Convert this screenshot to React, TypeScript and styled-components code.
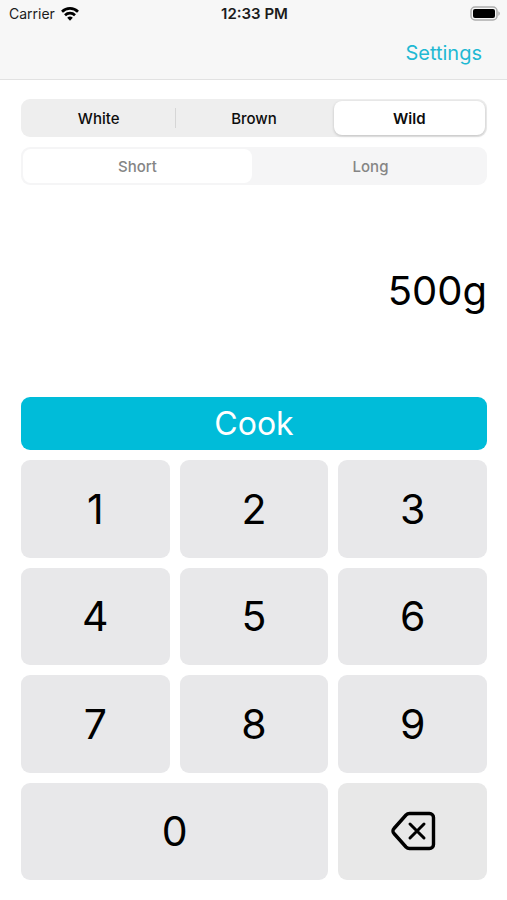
import React, { useState } from 'react';
import styled, { createGlobalStyle } from 'styled-components';

const GlobalStyle = createGlobalStyle`
  *, *::before, *::after { box-sizing: border-box; }
  body {
    margin: 0;
    background: #fff;
    color: #000;
    font-family: Inter, "Liberation Sans", sans-serif;
  }
  button, input { font: inherit; color: inherit; }
`;

const Screen = styled.div`
  display: flex;
  flex-direction: column;
  min-height: 100vh;
`;

const Header = styled.header`
  background: #f7f7f7;
  border-bottom: 1px solid #e2e2e2;
`;

const StatusBar = styled.div`
  display: grid;
  grid-template-columns: 1fr auto 1fr;
  align-items: center;
  height: 27px;
  padding: 0 7px 0 9px;
  font-size: 14px;
  color: #1c1c1c;
`;

const Carrier = styled.div`
  display: flex;
  align-items: center;
  gap: 6px;
`;

const Clock = styled.time`
  font-size: 15px;
  font-weight: 600;
`;

const Battery = styled.svg`
  justify-self: end;
`;

const NavBar = styled.nav`
  display: flex;
  justify-content: flex-end;
  align-items: center;
  height: 52px;
  padding: 0 25px;
`;

const NavLink = styled.a`
  color: #1fb9d3;
  font-size: 20px;
  line-height: 24px;
  text-decoration: none;
`;

const Main = styled.main`
  flex: 1;
  display: flex;
  flex-direction: column;
  padding: 19px 20px 20px 21px;
`;

const Selectors = styled.div`
  display: grid;
  gap: 10px;
`;

const Segments = styled.fieldset<{ $muted: boolean }>`
  display: flex;
  gap: 4px;
  min-width: 0;
  height: 38px;
  margin: 0;
  padding: 2px;
  border: 0;
  border-radius: 9px;
  background: ${p => (p.$muted ? '#f5f5f6' : '#eeeeee')};
  color: ${p => (p.$muted ? '#858585' : '#0c0c0c')};
`;

const Segment = styled.label<{ $selected: boolean; $muted: boolean; $divided: boolean }>`
  position: relative;
  flex: 1;
  display: flex;
  align-items: center;
  justify-content: center;
  border-radius: 8px;
  font-size: 15px;
  font-weight: ${p => (p.$selected && !p.$muted ? 600 : 500)};
  background: ${p => (p.$selected ? '#fff' : 'transparent')};
  box-shadow: ${p => (p.$selected && !p.$muted ? '0 1px 3px rgba(0, 0, 0, 0.2)' : 'none')};
  cursor: pointer;

  &::after {
    content: "";
    display: ${p => (p.$divided ? 'block' : 'none')};
    position: absolute;
    right: -2px;
    top: 7px;
    bottom: 7px;
    width: 1px;
    background: #d6d6d6;
  }
`;

const SegmentInput = styled.input`
  position: absolute;
  inset: 0;
  margin: 0;
  opacity: 0;
`;

const Amount = styled.output`
  display: flex;
  align-items: center;
  justify-content: flex-end;
  height: 212px;
  font-size: 40px;
  line-height: 48px;
`;

const Keypad = styled.div`
  flex: 1;
  display: grid;
  grid-template-columns: repeat(3, 1fr);
  grid-template-rows: 53px repeat(4, minmax(60px, 1fr));
  gap: 10px;
`;

const Key = styled.button<{ $span?: number }>`
  grid-column: span ${p => p.$span ?? 1};
  display: flex;
  align-items: center;
  justify-content: center;
  padding: 0;
  border: 0;
  border-radius: 9px;
  background: #e8e8ea;
  font-size: 41px;
  line-height: 48px;
  cursor: pointer;
`;

const CookKey = styled(Key)`
  background: #00bcd9;
  color: #fff;
  font-size: 32px;
  line-height: 40px;
`;

const DeleteKey = styled(Key)`
  background: #e8e8e8;
`;

interface ChoiceProps {
  name: string;
  options: string[];
  value: string;
  muted?: boolean;
  onChange: (value: string) => void;
}

function Choice({ name, options, value, muted = false, onChange }: ChoiceProps) {
  const selectedIndex = options.indexOf(value);
  return (
    <Segments $muted={muted} aria-label={name}>
      {options.map((option, i) => (
        <Segment
          key={option}
          $selected={option === value}
          $muted={muted}
          $divided={i < options.length - 1 && i !== selectedIndex && i + 1 !== selectedIndex}
        >
          <SegmentInput
            type="radio"
            name={name}
            value={option}
            checked={option === value}
            onChange={() => onChange(option)}
          />
          {option}
        </Segment>
      ))}
    </Segments>
  );
}

export default function App() {
  const [rice, setRice] = useState('Wild');
  const [grain, setGrain] = useState('Short');
  const [grams, setGrams] = useState('500');

  const press = (digit: string) => setGrams(g => (g === '0' ? digit : g + digit).slice(0, 5));
  const erase = () => setGrams(g => g.slice(0, -1) || '0');

  return (
    <Screen>
      <GlobalStyle />
      <Header>
        <StatusBar>
          <Carrier>
            Carrier
            <svg width="18" height="14" viewBox="0 0 18 14" fill="none" stroke="#000" strokeWidth="2.7" aria-hidden="true">
              <path d="M1 4.7a11.4 11.4 0 0 1 16 0" />
              <path d="M4 8.2a7.2 7.2 0 0 1 10 0" />
              <path d="M6.2 10.8a4 4 0 0 1 5.6 0L9 13.7z" fill="#000" stroke="none" />
            </svg>
          </Carrier>
          <Clock>12:33 PM</Clock>
          <Battery width="30" height="15" viewBox="0 0 30 15" aria-label="Battery full">
            <rect x="1" y="1" width="26" height="13" rx="4" fill="#f7f7f7" stroke="#adadad" strokeWidth="1.5" />
            <rect x="3" y="3" width="22" height="9" rx="2" fill="#000" />
            <path d="M28.3 5.2c2 .9 2 3.7 0 4.6z" fill="#adadad" />
          </Battery>
        </StatusBar>
        <NavBar>
          <NavLink href="#settings">Settings</NavLink>
        </NavBar>
      </Header>
      <Main>
        <Selectors>
          <Choice name="Rice" options={['White', 'Brown', 'Wild']} value={rice} onChange={setRice} />
          <Choice name="Grain" options={['Short', 'Long']} value={grain} muted onChange={setGrain} />
        </Selectors>
        <Amount>{grams}g</Amount>
        <Keypad>
          <CookKey type="button" $span={3}>Cook</CookKey>
          {['1', '2', '3', '4', '5', '6', '7', '8', '9'].map(d => (
            <Key key={d} type="button" onClick={() => press(d)}>{d}</Key>
          ))}
          <Key type="button" $span={2} onClick={() => press('0')}>0</Key>
          <DeleteKey type="button" aria-label="Delete" onClick={erase}>
            <svg width="46" height="40" viewBox="0 0 46 40" fill="none" stroke="#000" strokeWidth="3.4" strokeLinecap="round" strokeLinejoin="round" aria-hidden="true">
              <path d="M19.5 2.5H39.5a4 4 0 0 1 4 4V33.5a4 4 0 0 1-4 4H19.5a5 5 0 0 1-3.5-1.5L4 22.5a3.5 3.5 0 0 1 0-5L16 4a5 5 0 0 1 3.5-1.5z" />
              <path d="M20 13L34 27M34 13L20 27" strokeWidth="3" />
            </svg>
          </DeleteKey>
        </Keypad>
      </Main>
    </Screen>
  );
}
